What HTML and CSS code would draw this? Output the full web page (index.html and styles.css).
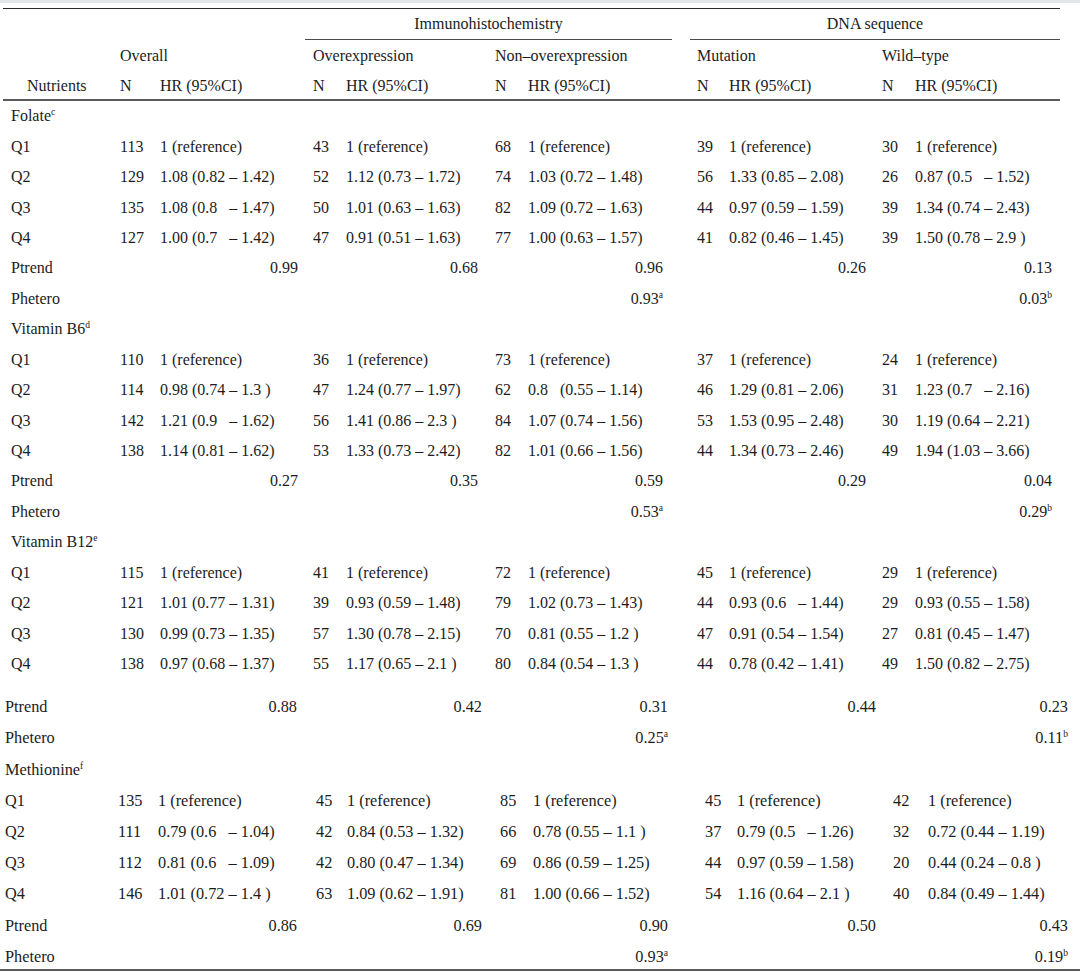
FILE: index.html
```html
<!DOCTYPE html>
<html>
<head>
<meta charset="utf-8">
<link rel="stylesheet" href="styles.css">
</head>
<body>
<div class="topband"></div>
<div class="sheet">
  <div class="rule-top"></div>
  <div class="top">
    <div class="head head1">
      <div class="grp grp-ihc">Immunohistochemistry</div>
      <div class="grp grp-dna">DNA sequence</div>
    </div>
    <div class="head head2">
      <div class="sub s1">Overall</div>
      <div class="sub s2">Overexpression</div>
      <div class="sub s3">Non–overexpression</div>
      <div class="sub s4">Mutation</div>
      <div class="sub s5">Wild–type</div>
    </div>
    <div class="head head3">
      <div class="nut">Nutrients</div>
      <div>N</div><div>HR (95%CI)</div>
      <div>N</div><div>HR (95%CI)</div>
      <div>N</div><div>HR (95%CI)</div>
      <div>N</div><div>HR (95%CI)</div>
      <div>N</div><div>HR (95%CI)</div>
    </div>
  </div>
  <div class="rule-mid"></div>
  <div class="top">
    <div class="row"><div class="lbl">Folate<sup class="fn">c</sup></div></div>
    <div class="row"><div class="lbl">Q1</div><div>113</div><div>1 (reference)</div><div>43</div><div>1 (reference)</div><div>68</div><div>1 (reference)</div><div>39</div><div>1 (reference)</div><div>30</div><div>1 (reference)</div></div>
    <div class="row"><div class="lbl">Q2</div><div>129</div><div>1.08 (0.82 – 1.42)</div><div>52</div><div>1.12 (0.73 – 1.72)</div><div>74</div><div>1.03 (0.72 – 1.48)</div><div>56</div><div>1.33 (0.85 – 2.08)</div><div>26</div><div>0.87 (0.5   – 1.52)</div></div>
    <div class="row"><div class="lbl">Q3</div><div>135</div><div>1.08 (0.8   – 1.47)</div><div>50</div><div>1.01 (0.63 – 1.63)</div><div>82</div><div>1.09 (0.72 – 1.63)</div><div>44</div><div>0.97 (0.59 – 1.59)</div><div>39</div><div>1.34 (0.74 – 2.43)</div></div>
    <div class="row"><div class="lbl">Q4</div><div>127</div><div>1.00 (0.7   – 1.42)</div><div>47</div><div>0.91 (0.51 – 1.63)</div><div>77</div><div>1.00 (0.63 – 1.57)</div><div>41</div><div>0.82 (0.46 – 1.45)</div><div>39</div><div>1.50 (0.78 – 2.9 )</div></div>
    <div class="row"><div class="lbl">Ptrend</div><div class="pv g1">0.99</div><div class="pv g2">0.68</div><div class="pv g3">0.96</div><div class="pv g4">0.26</div><div class="pv g5">0.13</div></div>
    <div class="row"><div class="lbl">Phetero</div><div class="pv g3">0.93<sup class="fn">a</sup></div><div class="pv g5">0.03<sup class="fn">b</sup></div></div>

    <div class="row"><div class="lbl">Vitamin B6<sup class="fn">d</sup></div></div>
    <div class="row"><div class="lbl">Q1</div><div>110</div><div>1 (reference)</div><div>36</div><div>1 (reference)</div><div>73</div><div>1 (reference)</div><div>37</div><div>1 (reference)</div><div>24</div><div>1 (reference)</div></div>
    <div class="row"><div class="lbl">Q2</div><div>114</div><div>0.98 (0.74 – 1.3 )</div><div>47</div><div>1.24 (0.77 – 1.97)</div><div>62</div><div>0.8   (0.55 – 1.14)</div><div>46</div><div>1.29 (0.81 – 2.06)</div><div>31</div><div>1.23 (0.7   – 2.16)</div></div>
    <div class="row"><div class="lbl">Q3</div><div>142</div><div>1.21 (0.9   – 1.62)</div><div>56</div><div>1.41 (0.86 – 2.3 )</div><div>84</div><div>1.07 (0.74 – 1.56)</div><div>53</div><div>1.53 (0.95 – 2.48)</div><div>30</div><div>1.19 (0.64 – 2.21)</div></div>
    <div class="row"><div class="lbl">Q4</div><div>138</div><div>1.14 (0.81 – 1.62)</div><div>53</div><div>1.33 (0.73 – 2.42)</div><div>82</div><div>1.01 (0.66 – 1.56)</div><div>44</div><div>1.34 (0.73 – 2.46)</div><div>49</div><div>1.94 (1.03 – 3.66)</div></div>
    <div class="row"><div class="lbl">Ptrend</div><div class="pv g1">0.27</div><div class="pv g2">0.35</div><div class="pv g3">0.59</div><div class="pv g4">0.29</div><div class="pv g5">0.04</div></div>
    <div class="row"><div class="lbl">Phetero</div><div class="pv g3">0.53<sup class="fn">a</sup></div><div class="pv g5">0.29<sup class="fn">b</sup></div></div>

    <div class="row"><div class="lbl">Vitamin B12<sup class="fn">e</sup></div></div>
    <div class="row"><div class="lbl">Q1</div><div>115</div><div>1 (reference)</div><div>41</div><div>1 (reference)</div><div>72</div><div>1 (reference)</div><div>45</div><div>1 (reference)</div><div>29</div><div>1 (reference)</div></div>
    <div class="row"><div class="lbl">Q2</div><div>121</div><div>1.01 (0.77 – 1.31)</div><div>39</div><div>0.93 (0.59 – 1.48)</div><div>79</div><div>1.02 (0.73 – 1.43)</div><div>44</div><div>0.93 (0.6   – 1.44)</div><div>29</div><div>0.93 (0.55 – 1.58)</div></div>
    <div class="row"><div class="lbl">Q3</div><div>130</div><div>0.99 (0.73 – 1.35)</div><div>57</div><div>1.30 (0.78 – 2.15)</div><div>70</div><div>0.81 (0.55 – 1.2 )</div><div>47</div><div>0.91 (0.54 – 1.54)</div><div>27</div><div>0.81 (0.45 – 1.47)</div></div>
    <div class="row"><div class="lbl">Q4</div><div>138</div><div>0.97 (0.68 – 1.37)</div><div>55</div><div>1.17 (0.65 – 2.1 )</div><div>80</div><div>0.84 (0.54 – 1.3 )</div><div>44</div><div>0.78 (0.42 – 1.41)</div><div>49</div><div>1.50 (0.82 – 2.75)</div></div>
  </div>

  <div class="bot">
    <div class="row"><div class="lbl">Ptrend</div><div class="pv g1">0.88</div><div class="pv g2">0.42</div><div class="pv g3">0.31</div><div class="pv g4">0.44</div><div class="pv g5">0.23</div></div>
    <div class="row"><div class="lbl">Phetero</div><div class="pv g3">0.25<sup class="fn">a</sup></div><div class="pv g5">0.11<sup class="fn">b</sup></div></div>
    <div class="row"><div class="lbl">Methionine<sup class="fn">f</sup></div></div>
    <div class="row"><div class="lbl">Q1</div><div>135</div><div>1 (reference)</div><div>45</div><div>1 (reference)</div><div>85</div><div>1 (reference)</div><div>45</div><div>1 (reference)</div><div>42</div><div>1 (reference)</div></div>
    <div class="row"><div class="lbl">Q2</div><div>111</div><div>0.79 (0.6   – 1.04)</div><div>42</div><div>0.84 (0.53 – 1.32)</div><div>66</div><div>0.78 (0.55 – 1.1 )</div><div>37</div><div>0.79 (0.5   – 1.26)</div><div>32</div><div>0.72 (0.44 – 1.19)</div></div>
    <div class="row"><div class="lbl">Q3</div><div>112</div><div>0.81 (0.6   – 1.09)</div><div>42</div><div>0.80 (0.47 – 1.34)</div><div>69</div><div>0.86 (0.59 – 1.25)</div><div>44</div><div>0.97 (0.59 – 1.58)</div><div>20</div><div>0.44 (0.24 – 0.8 )</div></div>
    <div class="row"><div class="lbl">Q4</div><div>146</div><div>1.01 (0.72 – 1.4 )</div><div>63</div><div>1.09 (0.62 – 1.91)</div><div>81</div><div>1.00 (0.66 – 1.52)</div><div>54</div><div>1.16 (0.64 – 2.1 )</div><div>40</div><div>0.84 (0.49 – 1.44)</div></div>
    <div class="row"><div class="lbl">Ptrend</div><div class="pv g1">0.86</div><div class="pv g2">0.69</div><div class="pv g3">0.90</div><div class="pv g4">0.50</div><div class="pv g5">0.43</div></div>
    <div class="row last"><div class="lbl">Phetero</div><div class="pv g3">0.93<sup class="fn">a</sup></div><div class="pv g5">0.19<sup class="fn">b</sup></div></div>
  </div>
  <div class="rule-bot"></div>
</div>
</body>
</html>
```

FILE: styles.css
```css
html, body {
  margin: 0;
  padding: 0;
  background: #ffffff;
}

.topband {
  height: 3px;
  background: #e2e6ea;
}

.sheet {
  width: 1080px;
  color: #1c1c1c;
  font-family: "Liberation Serif", "Times New Roman", serif;
  font-size: 16px;
  line-height: 1;
}

.rule-top {
  margin: 5px 0 0 3px;
  width: 1057px;
  height: 1px;
  background: #2a2a2a;
}

.rule-mid {
  margin-left: 3px;
  width: 1057px;
  height: 2px;
  background: #5a5a5a;
}

.rule-bot {
  width: 1080px;
  height: 2px;
  background: #5a5a5a;
}

.top .head,
.top .row {
  display: grid;
  grid-template-columns: 120px 40px 153px 33px 149px 33px 169px 32px 153px 33px 145px;
  align-items: center;
  white-space: pre;
}

.bot .row {
  display: grid;
  grid-template-columns: 118px 40px 158px 31px 153px 33px 172px 32px 156px 35px 152px;
  align-items: center;
  white-space: pre;
  height: 31.2px;
  font-size: 16.3px;
}

.bot {
  margin-top: 12.5px;
}

.top .row {
  height: 30.44px;
}

.head1 {
  height: 31px;
}

.grp {
  height: 30px;
  line-height: 30px;
  text-align: center;
  border-bottom: 1px solid #4a4a4a;
}

.grp-ihc {
  grid-column: 4 / 8;
  margin-left: -8px;
  margin-right: 25px;
}

.grp-dna {
  grid-column: 8 / 12;
  margin-left: -7px;
}

.head2 {
  height: 32px;
}

.s1 { grid-column: 2 / 4; }
.s2 { grid-column: 4 / 6; }
.s3 { grid-column: 6 / 8; }
.s4 { grid-column: 8 / 10; }
.s5 { grid-column: 10 / 12; }

.head3 {
  height: 27px;
}

.nut {
  padding-left: 27px;
}

.top .lbl {
  padding-left: 11px;
}

.bot .lbl {
  padding-left: 5px;
}

.bot .row.last {
  box-sizing: border-box;
  height: 28px;
  padding-top: 4px;
}

.pv {
  text-align: right;
}

.g1 { grid-column: 3; }
.g2 { grid-column: 5; }
.g3 { grid-column: 7; }
.g4 { grid-column: 9; }
.g5 { grid-column: 11; }

.top .pv.g1 { padding-right: 15px; }
.top .pv.g2 { padding-right: 17px; }
.top .pv.g3 { padding-right: 34px; }
.top .pv.g4 { padding-right: 16px; }
.top .pv.g5 { padding-right: 8px; }

.bot .pv.g1 { padding-right: 19px; }
.bot .pv.g2 { padding-right: 18px; }
.bot .pv.g3 { padding-right: 37px; }
.bot .pv.g4 { padding-right: 17px; }
.bot .pv.g5 { padding-right: 12px; }

.fn {
  font-size: 9.5px;
  line-height: 0;
  vertical-align: 6px;
}
```
